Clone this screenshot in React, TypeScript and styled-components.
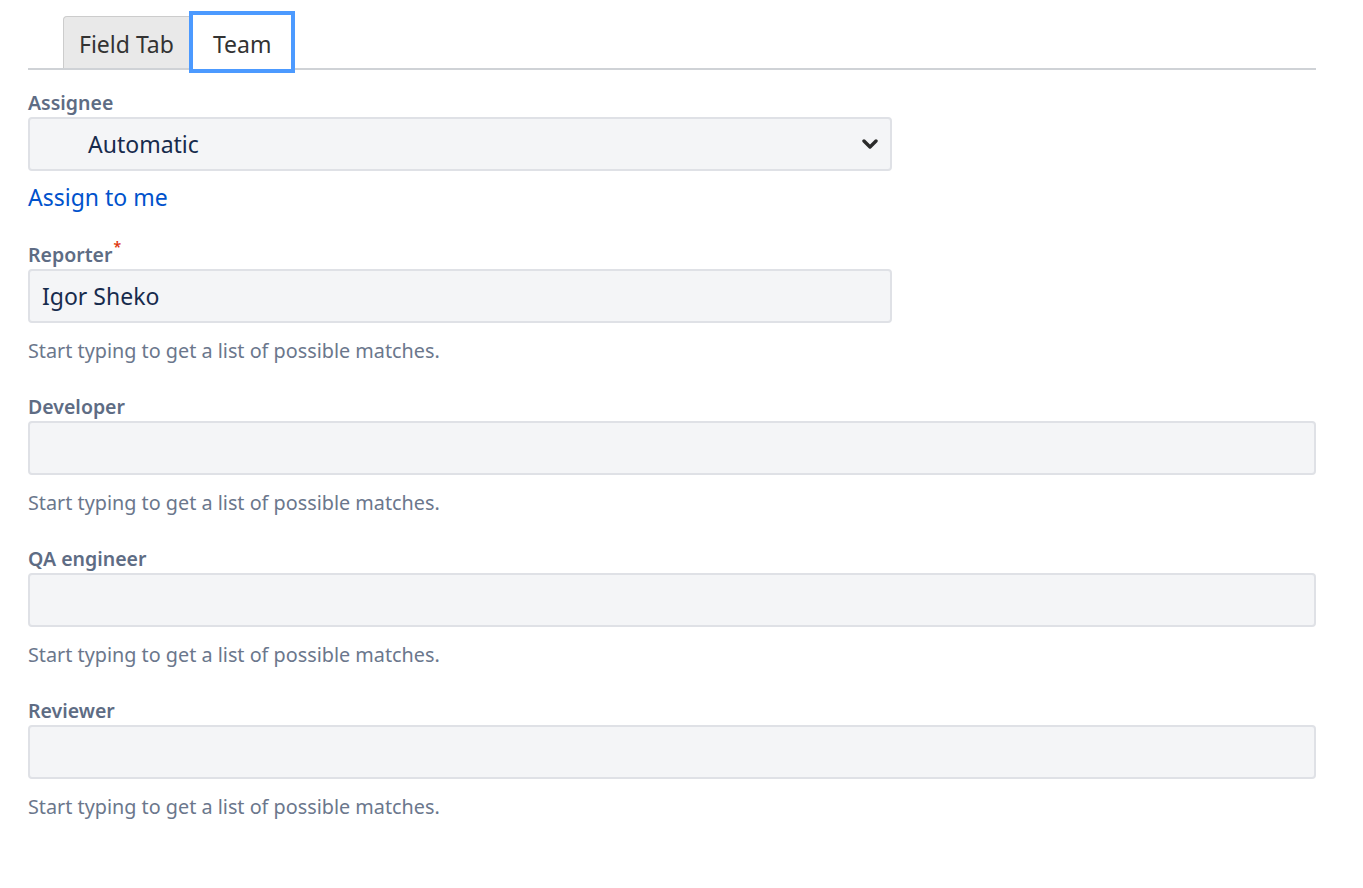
import React from 'react';
import styled, { createGlobalStyle } from 'styled-components';

const GlobalStyle = createGlobalStyle`
  body {
    margin: 0;
    background: #ffffff;
    font-family: 'Noto Sans', 'Open Sans', 'Liberation Sans', sans-serif;
  }
`;

const Page = styled.div`
  width: 1288px;
  margin-left: 28px;
  padding-top: 12px;
`;

const TabList = styled.div`
  display: flex;
  align-items: flex-end;
  padding-left: 35px;
  border-bottom: 2px solid #cfd2d6;
  height: 56px;
`;

const Tab = styled.div<{ $active?: boolean }>`
  box-sizing: border-box;
  display: flex;
  align-items: center;
  justify-content: center;
  height: ${(p) => (p.$active ? '62px' : '52px')};
  padding: 3px ${(p) => (p.$active ? '20px' : '15px')} 0;
  margin-bottom: ${(p) => (p.$active ? '-5px' : '0')};
  margin-left: ${(p) => (p.$active ? '-1px' : '0')};
  font-size: 23px;
  color: #333333;
  background: ${(p) => (p.$active ? '#ffffff' : '#e9e9e9')};
  border: ${(p) => (p.$active ? '4px solid #4c9aff' : '1px solid #cccccc')};
  border-bottom: ${(p) => (p.$active ? '4px solid #4c9aff' : 'none')};
  border-radius: ${(p) => (p.$active ? '0' : '4px 0 0 0')};
`;

const Form = styled.div`
  padding-top: 21px;
`;

const Field = styled.div`
  margin-bottom: 31px;
`;

const Label = styled.label`
  display: block;
  font-size: 19.5px;
  line-height: 24px;
  font-weight: 600;
  color: #5e6c84;
`;

const Required = styled.span`
  display: inline-block;
  vertical-align: top;
  line-height: 0;
  margin-top: 4px;
  margin-left: 1px;
  font-size: 14px;
  color: #de350b;
`;

const Box = styled.div<{ $width?: number }>`
  box-sizing: border-box;
  display: flex;
  align-items: center;
  justify-content: space-between;
  margin-top: 2px;
  width: ${(p) => (p.$width ? `${p.$width}px` : '100%')};
  height: 54px;
  background: #f4f5f7;
  border: 2px solid #dfe1e6;
  border-radius: 4px;
  font-size: 23px;
  color: #172b4d;
`;

const BoxText = styled.span<{ $indent: number }>`
  padding-left: ${(p) => p.$indent}px;
`;

const Chevron = styled.svg`
  margin-right: 12px;
`;

const Link = styled.a`
  display: block;
  margin-top: 11px;
  font-size: 23px;
  line-height: 30px;
  color: #0052cc;
  text-decoration: none;
`;

const Help = styled.div`
  margin-top: 15px;
  font-size: 19.8px;
  line-height: 26px;
  color: #6b778c;
`;

const HELP = 'Start typing to get a list of possible matches.';

const userFields = ['Developer', 'QA engineer', 'Reviewer'];

const App: React.FC = () => {
  return (
    <>
      <GlobalStyle />
      <Page>
        <TabList>
          <Tab>Field Tab</Tab>
          <Tab $active>Team</Tab>
        </TabList>
        <Form>
          <Field>
            <Label>Assignee</Label>
            <Box $width={864}>
              <BoxText $indent={58}>Automatic</BoxText>
              <Chevron width='16' height='12' viewBox='0 0 16 12'>
                <path d='M2 3 L8 9 L14 3' fill='none' stroke='#2b2b2b' strokeWidth='3.4' strokeLinecap='round' strokeLinejoin='round' />
              </Chevron>
            </Box>
            <Link href='#'>Assign to me</Link>
          </Field>
          <Field>
            <Label>
              Reporter<Required>*</Required>
            </Label>
            <Box $width={864}>
              <BoxText $indent={12}>Igor Sheko</BoxText>
            </Box>
            <Help>{HELP}</Help>
          </Field>
          {userFields.map((name) => (
            <Field key={name}>
              <Label>{name}</Label>
              <Box />
              <Help>{HELP}</Help>
            </Field>
          ))}
        </Form>
      </Page>
    </>
  );
};

export default App;
